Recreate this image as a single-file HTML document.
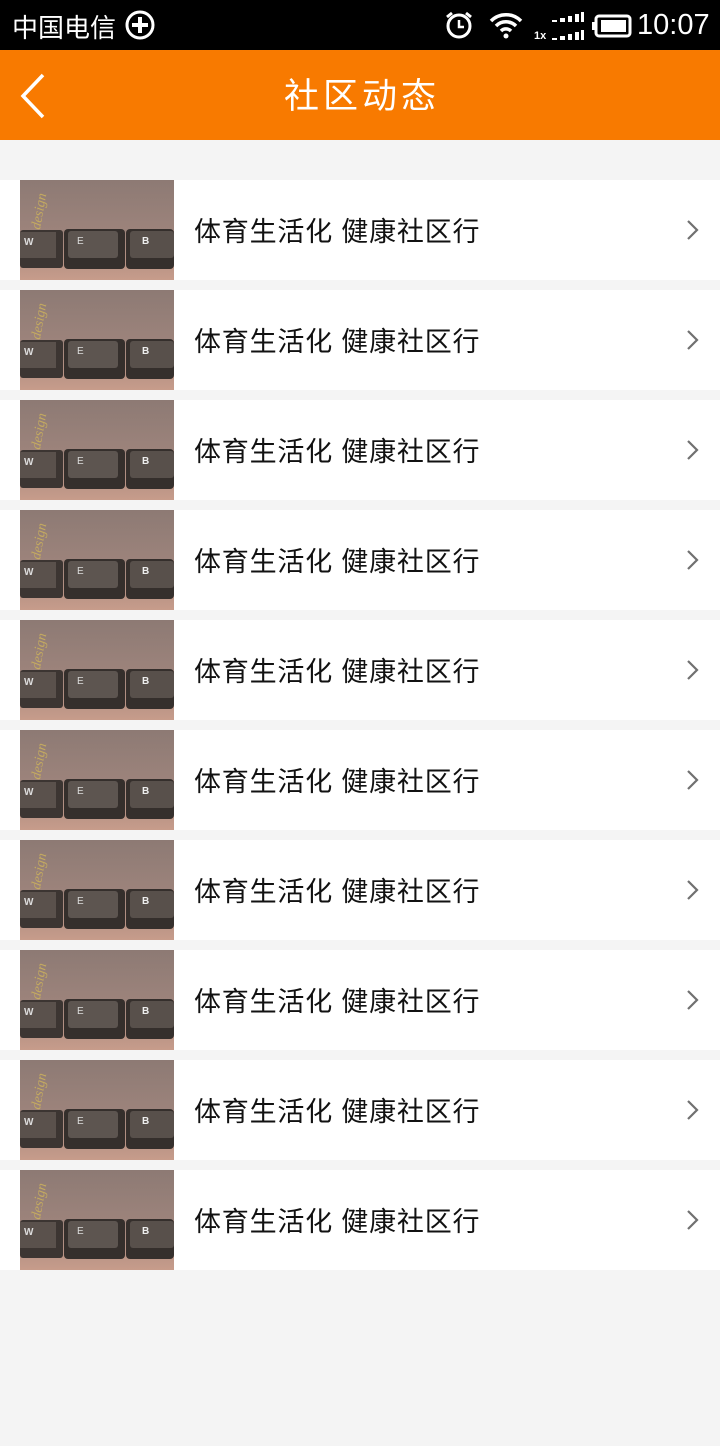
<!DOCTYPE html>
<html><head><meta charset="utf-8"><style>
*{margin:0;padding:0;box-sizing:border-box}
body{width:720px;height:1446px;background:#f4f4f4;font-family:"Liberation Sans","Noto Sans CJK SC",sans-serif;position:relative;overflow:hidden}
.sb{position:absolute;left:0;top:0;width:720px;height:50px;background:#000;color:#fff}
.hd{position:absolute;left:0;top:50px;width:720px;height:90px;background:#f87a00}
.hd .t{position:absolute;left:0;width:720px;top:2px;line-height:90px;text-align:center;color:#fff;font-size:35px;letter-spacing:4px;padding-left:4px}
.row{position:absolute;left:0;width:720px;height:100px;background:#fff}
.row svg.th{position:absolute;left:20px;top:0}
.row .tx{position:absolute;left:194px;top:1px;line-height:102px;font-size:27px;letter-spacing:0.8px;color:#111}
.row svg.ch{position:absolute;left:684px;top:38px}
</style></head><body>
<div class="sb">
<span style="position:absolute;left:12px;top:8px;font-size:26px;">中国电信</span>
<svg style="position:absolute;left:124px;top:9px" width="32" height="32"><circle cx="16" cy="16" r="13" fill="none" stroke="#fff" stroke-width="3"/><path d="M16 8v16M8 16h16" stroke="#fff" stroke-width="4"/></svg>
<svg style="position:absolute;left:444px;top:10px" width="30" height="30"><circle cx="15" cy="16" r="11" fill="none" stroke="#fff" stroke-width="3"/><path d="M15 10v7h5" stroke="#fff" stroke-width="2.5" fill="none"/><path d="M3 7l5-4M27 7l-5-4" stroke="#fff" stroke-width="3"/></svg>
<svg style="position:absolute;left:488px;top:10px" width="36" height="30"><path d="M3 11a21 21 0 0 1 30 0M8 16a14 14 0 0 1 20 0M13 21a7 7 0 0 1 10 0" stroke="#fff" stroke-width="3.5" fill="none"/><circle cx="18" cy="26" r="2.5" fill="#fff"/></svg>
<span style="position:absolute;left:534px;top:30px;font-size:11px;font-weight:bold">1x</span>
<svg style="position:absolute;left:550px;top:12px" width="36" height="30"><g fill="#fff"><rect x="2" y="8" width="5" height="2"/><rect x="10" y="6" width="5" height="4"/><rect x="18" y="4" width="4" height="6"/><rect x="25" y="2" width="4" height="8"/><rect x="31" y="0" width="3" height="10"/><rect x="2" y="26" width="5" height="2"/><rect x="10" y="24" width="5" height="4"/><rect x="18" y="22" width="4" height="6"/><rect x="25" y="20" width="4" height="8"/><rect x="31" y="18" width="3" height="10"/></g></svg>
<svg style="position:absolute;left:592px;top:14px" width="40" height="24"><rect x="4" y="2" width="34" height="20" rx="3" fill="none" stroke="#fff" stroke-width="3"/><rect x="0" y="8" width="4" height="8" fill="#fff"/><rect x="9" y="6" width="25" height="12" fill="#fff"/></svg>
<span style="position:absolute;left:637px;top:9px;font-size:29px;">10:07</span>
</div>
<div class="hd">
<svg style="position:absolute;left:18px;top:22px" width="30" height="48"><path d="M25 3L5 24l20 21" stroke="#fff" stroke-width="3.5" fill="none"/></svg>
<div class="t">社区动态</div>
</div>
<div id="list"></div>
<script>
var th='<svg class="th" width="154" height="100"><defs><linearGradient id="g" x1="0" y1="0" x2="0" y2="1"><stop offset="0" stop-color="#8d7a74"/><stop offset="0.5" stop-color="#9c837b"/><stop offset="1" stop-color="#c79c8b"/></linearGradient></defs><rect width="154" height="100" fill="url(#g)"/><rect x="0" y="50" width="43" height="38" rx="3" fill="#3c3532"/><rect x="0" y="52" width="36" height="26" fill="#5a514c"/><rect x="44" y="49" width="61" height="40" rx="4" fill="#352f2c"/><rect x="48" y="51" width="50" height="27" rx="3" fill="#5d5550"/><rect x="106" y="49" width="48" height="40" rx="4" fill="#352f2c"/><rect x="110" y="51" width="44" height="27" rx="3" fill="#58504b"/><text x="4" y="65" font-size="10" fill="#ddd" font-family="Liberation Sans" font-weight="bold">W</text><text x="57" y="64" font-size="10" fill="#ddd" font-family="Liberation Sans">E</text><text x="122" y="64" font-size="10" fill="#eee" font-family="Liberation Sans" font-weight="bold">B</text><text transform="translate(20,50) rotate(-80)" font-size="14" fill="#c4aa60" font-family="Liberation Serif" font-style="italic">design</text></svg>';
var h='';
for(var i=0;i<10;i++){h+='<div class="row" style="top:'+(180+110*i)+'px">'+th+'<div class="tx">体育生活化 健康社区行</div><svg class="ch" width="16" height="24"><path d="M4 3l9 9-9 9" stroke="#707070" stroke-width="2.2" fill="none"/></svg></div>';}
document.getElementById('list').innerHTML=h;
</script>
</body></html>
